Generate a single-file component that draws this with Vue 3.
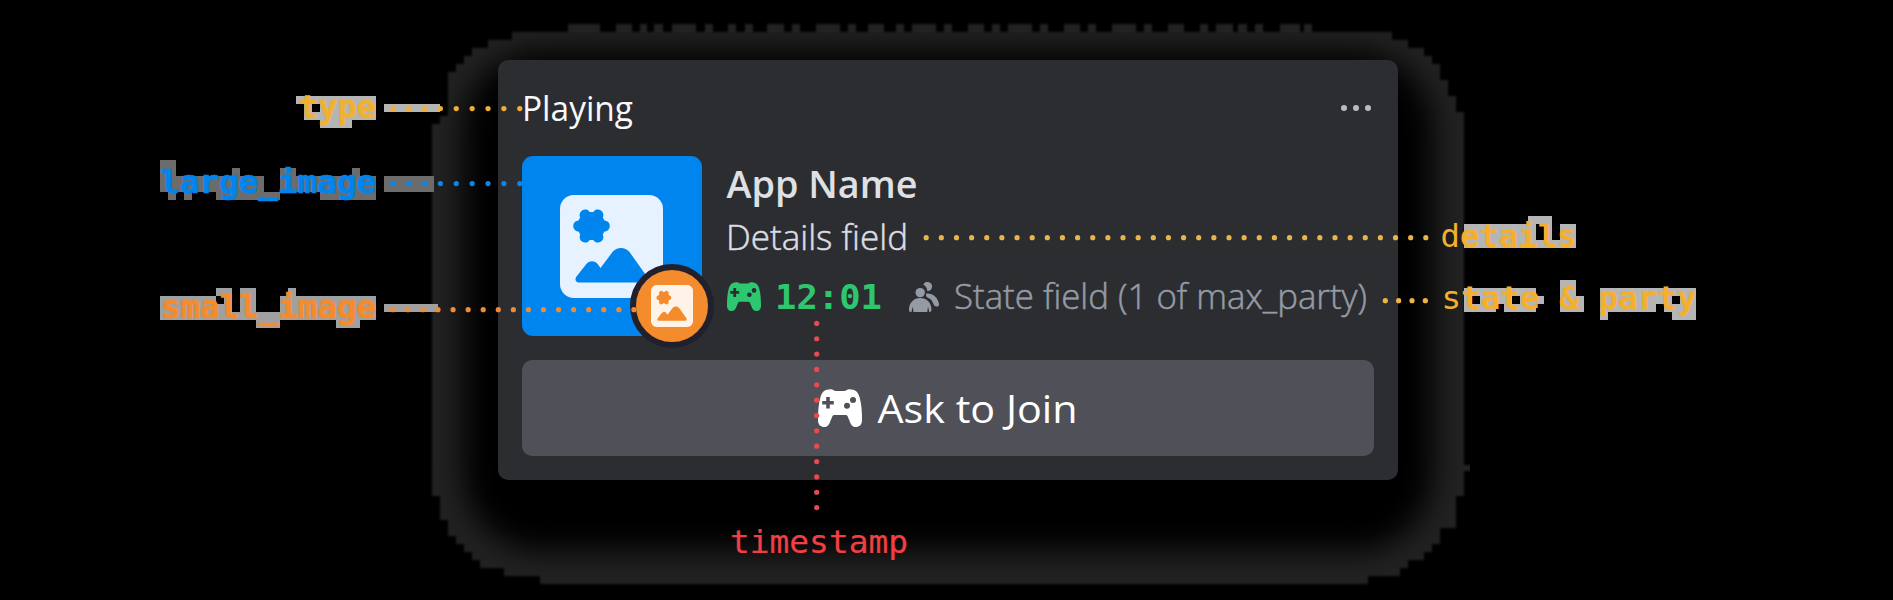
<script setup>
const dots = (x, y, dx, dy, n) =>
  Array.from({ length: n }, (_, i) => ({ x: x + dx * i, y: y + dy * i }))

const lines = [
  { color: '#f0b132', pts: dots(392.8, 108.6, 15.87, 0, 9) },
  { color: '#0a86ec', pts: dots(392.8, 183.6, 15.87, 0, 9) },
  { color: '#ef8a35', pts: dots(392.8, 309.7, 15.07, 0, 17) },
  { color: '#e9b548', pts: dots(926.2, 237.7, 15.14, 0, 34) },
  { color: '#f0b541', pts: dots(1385.3, 300.7, 13.35, 0, 4) },
  { color: '#e84a50', pts: dots(816.7, 323.4, 0, 15.35, 13) },
]

// Each block: [x, y, width, height] on an 8px grid
const blocks = [
  {
    color: '#b5b5b5',
    cells: [
      [296, 96, 80, 8], [304, 104, 8, 8], [320, 104, 56, 8], [304, 112, 72, 8], [320, 120, 32, 8],
      [384, 104, 56, 8],
      [1528, 216, 24, 8], [1464, 224, 72, 16], [1544, 224, 8, 16], [1560, 224, 16, 16], [1464, 240, 112, 8],
      [1560, 280, 16, 8], [1464, 288, 72, 8], [1560, 288, 16, 8], [1600, 288, 96, 8],
      [1464, 296, 8, 8], [1480, 296, 32, 8], [1520, 296, 24, 8], [1560, 296, 24, 8], [1600, 296, 72, 8],
      [1680, 296, 16, 8], [1464, 304, 32, 8], [1504, 304, 32, 8], [1560, 304, 24, 8], [1600, 304, 56, 8],
      [1664, 304, 32, 8], [1600, 312, 8, 8], [1672, 312, 24, 8],
    ],
  },
  {
    color: '#6c6c6c',
    cells: [
      [160, 160, 16, 16], [232, 168, 8, 8], [280, 168, 16, 8], [352, 168, 8, 8],
      [160, 176, 104, 16], [280, 176, 96, 16],
      [168, 192, 8, 8], [184, 192, 8, 8], [216, 192, 64, 8], [320, 192, 56, 8],
      [384, 176, 50, 16],
    ],
  },
  {
    color: '#a0a0a0',
    cells: [
      [216, 288, 16, 8], [240, 288, 16, 8], [288, 288, 8, 8],
      [160, 296, 56, 8], [224, 296, 8, 8], [240, 296, 16, 8], [280, 296, 96, 16],
      [160, 304, 72, 8], [240, 304, 16, 8], [160, 312, 216, 8],
      [256, 320, 24, 8], [336, 320, 24, 8], [384, 304, 54, 8],
    ],
  },
]

const labels = [
  { t: 'type', x: 299, y: 117.5, w: 77, c: '#f0b132', b: true },
  { t: 'large_image', x: 160, y: 192.5, w: 216, c: '#0084ee', b: true },
  { t: 'small_image', x: 161, y: 318, w: 215, c: '#f48b2c', b: true },
  { t: 'timestamp', x: 730, y: 552.5, w: 178, c: '#f23f43', b: false },
]

const bumps = [
  [568, 32], [616, 16], [640, 7], [654, 9], [672, 24], [705, 8], [728, 8], [745, 8], [767, 17], [792, 8],
  [816, 24], [848, 8], [868, 16], [896, 8], [912, 24], [944, 8], [968, 16], [992, 8], [1008, 24],
  [1040, 8], [1064, 16], [1088, 8], [1112, 24], [1144, 8], [1168, 16], [1200, 8], [1216, 17],
  [1238, 9], [1255, 8], [1280, 20], [1304, 8],
]
</script>

<template>
  <div class="stage">
    <svg class="layer" width="1893" height="600" viewBox="0 0 1893 600">
      <defs>
        <filter id="soft" x="-10%" y="-20%" width="120%" height="140%" color-interpolation-filters="sRGB"><feGaussianBlur stdDeviation="15" /></filter>
        <filter id="edge" x="-5%" y="-5%" width="110%" height="110%" color-interpolation-filters="sRGB"><feGaussianBlur stdDeviation="1.3" /></filter>
        <clipPath id="inner"><rect x="430" y="20" width="1040" height="566" /></clipPath>
        <path id="halo" d="M432 124H440V116H448V72H456V64H464V56H472V48H488V40H512V32H1392V40H1408V48H1424V56H1432V64H1440V80H1448V96H1456V112H1464V496H1456V528H1440V544H1432V552H1424V560H1408V568H1400V576H1368V584H540V576H504V568H480V560H472V552H464V544H456V536H448V520H440V496H432Z" />
        <clipPath id="haloClip"><use href="#halo" /></clipPath>
      </defs>
      <g filter="url(#edge)" fill="#222" clip-path="url(#inner)">
        <use href="#halo" />
        <rect v-for="b in bumps" :key="b[0]" :x="b[0]" y="24" :width="b[1]" height="10" />
        <rect x="1462" y="465" width="9" height="6" />
      </g>
      <g clip-path="url(#haloClip)">
        <rect x="463" y="51" width="970" height="500" rx="78" fill="#000" filter="url(#soft)" />
      </g>
      <g v-for="g in blocks" :key="g.color" :fill="g.color" shape-rendering="crispEdges">
        <rect v-for="(c, i) in g.cells" :key="i" :x="c[0]" :y="c[1]" :width="c[2]" :height="c[3]" />
      </g>
    </svg>

    <section class="card">
      <header class="head">
        <svg class="txt" width="110" height="50"><text x="0" y="37.5" textLength="111" lengthAdjust="spacingAndGlyphs" font-size="35" fill="#f8f9fb">Playing</text></svg>
        <svg width="30" height="6" fill="#b8bcc2"><circle cx="3" cy="3" r="3" /><circle cx="15" cy="3" r="3" /><circle cx="27" cy="3" r="3" /></svg>
      </header>

      <div class="body">
        <div class="art">
          <svg class="photo" viewBox="0 0 103 103">
            <rect width="103" height="103" rx="14" fill="#e6f2ff" />
            <g fill="#0084ee">
              <circle cx="31.5" cy="31" r="14" />
              <circle v-for="a in 6" :key="a" cx="44.3" cy="31" r="5.5" :transform="`rotate(${a * 60} 31.5 31)`" />
              <path d="M19 87.5C15.5 87.5 14.5 84 16.5 81.5L26 69.5C29.5 65 35 65.5 38 69.5L40.5 73L52.5 57C57 51.5 65 51.5 69.5 57L86.5 81C88.5 84 87.5 87.5 84 87.5Z" />
            </g>
          </svg>
          <div class="badge">
            <svg viewBox="0 0 103 103">
              <rect width="103" height="103" rx="14" fill="#fff3e8" />
              <g fill="#f48b2c">
                <circle cx="31.5" cy="31" r="14" />
                <circle v-for="a in 6" :key="a" cx="44.3" cy="31" r="5.5" :transform="`rotate(${a * 60} 31.5 31)`" />
                <path d="M19 87.5C15.5 87.5 14.5 84 16.5 81.5L26 69.5C29.5 65 35 65.5 38 69.5L40.5 73L52.5 57C57 51.5 65 51.5 69.5 57L86.5 81C88.5 84 87.5 87.5 84 87.5Z" />
              </g>
            </svg>
          </div>
        </div>

        <div class="info">
          <svg class="txt" width="192" height="50"><text x="0.5" y="40" textLength="191" lengthAdjust="spacingAndGlyphs" font-size="38.5" font-weight="600" fill="#dfe0e4">App Name</text></svg>
          <svg class="txt details" width="182" height="50"><text class="light" x="0" y="38.5" textLength="182" lengthAdjust="spacingAndGlyphs" font-size="35" font-weight="300" fill="#dbdde2" stroke="#dbdde2">Details field</text></svg>
          <div class="status">
            <svg class="pad" width="34" height="29" viewBox="0 0 44 38" preserveAspectRatio="none">
              <path fill="#2dc770" d="M13 .2C15 .2 16 2 18 2H26C28 2 29 .2 31 .2C38 .2 40 3 41.5 8C43.5 15 44 22 44 31C44 36 41 38 38 38C34.5 38 33 36 31.8 32.5L29.5 27Q29 26 27.5 26H16.5Q15 26 14.5 27L12.2 32.5C11 36 9.5 38 6 38C3 38 0 36 0 31C0 22 .5 15 2.5 8C4 3 6 .2 13 .2Z" />
              <g fill="#2b2d31"><path d="M8.2 8h3.6v3.9h4v3.6h-4v4h-3.6v-4h-4v-3.6h4z" /><circle cx="29" cy="16.8" r="3" /><circle cx="35" cy="11" r="3" /></g>
            </svg>
            <svg class="mono time" width="108" height="50"><text x="-1" y="38.5" textLength="107" lengthAdjust="spacingAndGlyphs" font-size="34" font-weight="700" fill="#2dc770">12:01</text></svg>
            <svg class="people" width="30" height="30" viewBox="0 0 30 30" fill="#949ba4">
              <path d="M14.3 2.5A4.6 4.6 0 1 1 18.2 9.1C18.3 6.5 16.8 4 14.3 2.5Z" />
              <path d="M17.5 11.5C24 11 29.5 16 30 22.5C30.1 24.5 28 25 26.5 24.3C23.5 23 24.5 17.5 18.5 15.5C17 15 16.5 12 17.5 11.5Z" />
              <circle cx="11.2" cy="10.6" r="4.7" />
              <path d="M11.2 16C17.5 16 22.5 20.5 22.5 27.5C22.5 29 22 30 20.5 30H20.2L19 24.5L18.3 30H4.5L3.7 24.5L2.5 30H1.5C.3 30 0 29 0 27.5C0 20.5 5 16 11.2 16Z" />
            </svg>
            <svg class="txt state" width="413" height="50"><text class="light" x="1" y="38.5" textLength="413" lengthAdjust="spacingAndGlyphs" font-size="35" font-weight="300" fill="#949ba4" stroke="#949ba4">State field (1 of max_party)</text></svg>
          </div>
        </div>
      </div>

      <button class="join">
        <svg width="44" height="38" viewBox="0 0 44 38">
          <path fill="#fff" d="M13 .2C15 .2 16 2 18 2H26C28 2 29 .2 31 .2C38 .2 40 3 41.5 8C43.5 15 44 22 44 31C44 36 41 38 38 38C34.5 38 33 36 31.8 32.5L29.5 27Q29 26 27.5 26H16.5Q15 26 14.5 27L12.2 32.5C11 36 9.5 38 6 38C3 38 0 36 0 31C0 22 .5 15 2.5 8C4 3 6 .2 13 .2Z" />
          <g fill="#4f5058"><path d="M8.2 8h3.6v3.9h4v3.6h-4v4h-3.6v-4h-4v-3.6h4z" /><circle cx="29" cy="16.8" r="3" /><circle cx="35" cy="11" r="3" /></g>
        </svg>
        <svg class="txt ask" width="200" height="50"><text x="0.5" y="39.5" textLength="200" lengthAdjust="spacingAndGlyphs" font-size="39" fill="#fff">Ask to Join</text></svg>
      </button>
    </section>

    <svg class="layer mono" width="1893" height="600" viewBox="0 0 1893 600">
      <g v-for="(l, i) in lines" :key="i" :fill="l.color">
        <circle v-for="(p, j) in l.pts" :key="j" :cx="p.x" :cy="p.y" r="2.6" />
      </g>
      <text
        v-for="l in labels" :key="l.t" :x="l.x" :y="l.y" :textLength="l.w" lengthAdjust="spacingAndGlyphs"
        font-size="32" :font-weight="l.b ? 700 : 400" :fill="l.c" :stroke="l.c" :stroke-width="l.b ? 0.6 : 0.2"
      >{{ l.t }}</text>
      <text x="1440.5" y="246.5" textLength="136" lengthAdjust="spacingAndGlyphs" font-size="32" fill="#f5af2d">d<tspan font-weight="700">etails</tspan></text>
      <text x="1441.5" y="309" textLength="255" lengthAdjust="spacingAndGlyphs" font-size="32" fill="#f5af2d">s<tspan font-weight="700">tate &amp; party</tspan></text>
    </svg>
  </div>
</template>

<style>
body { background: #000; }
</style>

<style scoped>
.stage {
  position: relative;
  box-sizing: border-box;
  width: 1893px;
  height: 600px;
  padding: 60px 495px 0 498px;
  background: #000;
  overflow: hidden;
  font-family: "Open Sans", "Noto Sans", sans-serif;
}
.layer { position: absolute; left: 0; top: 0; pointer-events: none; }
.mono { font-family: "DejaVu Sans Mono", monospace; overflow: visible; }
.txt { overflow: visible; }
.light { stroke-width: 0.5px; }
svg { display: block; flex: none; }
.card {
  position: relative;
  box-sizing: border-box;
  width: 900px;
  height: 420px;
  padding: 0 24px 24px;
  border-radius: 10px;
  background: #2c2d31;
}
.head {
  display: flex;
  align-items: center;
  justify-content: space-between;
  height: 96px;
  padding-right: 3px;
}
.body { display: flex; height: 204px; }
.art {
  position: relative;
  display: grid;
  place-items: center;
  width: 180px;
  height: 180px;
  border-radius: 11px;
  background: #0084ee;
}
.photo { width: 103px; height: 103px; margin: 0 1px 0 0; }
.badge {
  position: absolute;
  left: 108px;
  top: 108px;
  display: grid;
  place-items: center;
  box-sizing: border-box;
  width: 84px;
  height: 84px;
  border: 6px solid #22202d;
  border-radius: 50%;
  background: #f48b2c;
}
.badge svg { width: 42px; height: 42px; }
.info { padding: 2px 0 0 24px; }
.details { margin-top: 2.5px; }
.status { display: flex; align-items: center; margin-top: 9.5px; }
.pad { margin: 3px 0 0 1px; }
.time { margin-left: 15px; }
.people { margin: 4px 0 0 25px; }
.state { margin-left: 14px; }
.join {
  display: flex;
  align-items: center;
  justify-content: center;
  width: 852px;
  height: 96px;
  padding: 0 2px 0 0;
  border: 0;
  border-radius: 10px;
  background: #4f5058;
  font-family: inherit;
}
.ask { margin-left: 15px; }
</style>
